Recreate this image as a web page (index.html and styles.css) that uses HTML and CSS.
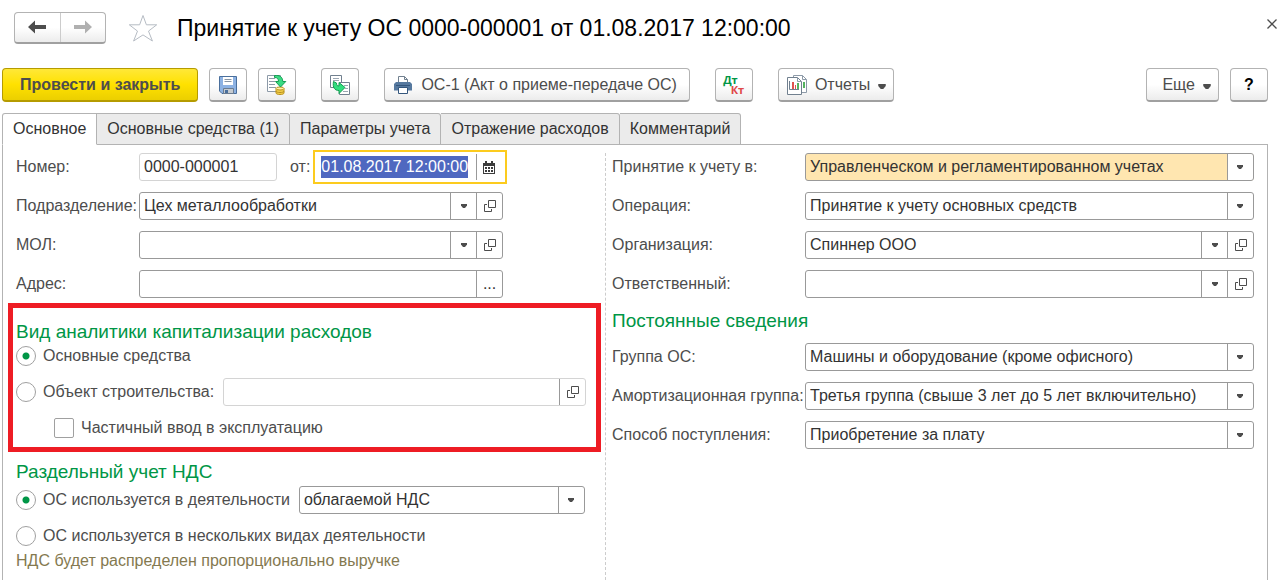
FILE: index.html
```html
<!DOCTYPE html>
<html lang="ru">
	<head>
		<meta charset="utf-8" />
		<title>Принятие к учету ОС</title>
		<link rel="stylesheet" href="styles.css">
		<script src="main.js" defer></script>
	</head>
	<body>
		<svg class="defs" aria-hidden="true">
			<symbol id="open" viewBox="0 0 12 12"><path d="M4.500 0.500h7v7h-7z M3 4.500H0.500v7h7V9" fill="none" stroke="#4d4d4d"/></symbol>
			<symbol id="arrow" viewBox="0 0 6 4"><path d="M0 0h6v1.500L4 4H2L0 1.500z" fill="#4d4d4d"/></symbol>
		</svg>

		<header class="header">
			<div class="nav">
				<button type="button" aria-label="Назад">
					<svg width="18" height="14" viewBox="0 0 18 14"><path d="M0 7l7-6.500v4.500h11v4H7v4.500z" fill="#4d4d4d"/></svg>
				</button>
				<button type="button" aria-label="Вперед">
					<svg width="18" height="14" viewBox="0 0 18 14"><path d="M18 7l-7-6.500v4.500H0v4h11v4.500z" fill="#b0b0b0"/></svg>
				</button>
			</div>
			<button type="button" class="star" aria-label="В избранное">
				<svg width="30" height="28" viewBox="0 0 30 28"><path d="M15 1.500l3.400 9.300h10.300l-8.200 6.300 3.900 9.900-9.400-6.100L5.600 27l3.900-9.900-8.200-6.300h10.300z" fill="#fff" stroke="#b6bcc4"/></svg>
			</button>
			<h1>Принятие к учету ОС 0000-000001 от 01.08.2017 12:00:00</h1>
			<button type="button" class="close" aria-label="Закрыть">
				<svg width="10" height="10" viewBox="0 0 10 10"><path d="M0.500 0.500l9 9M9.500 0.500l-9 9" stroke="#4d4d4d" stroke-width="1.300"/></svg>
			</button>
		</header>

		<div class="toolbar">
			<button type="button" class="btn primary">Провести и закрыть</button>
			<button type="button" class="btn icon" aria-label="Записать">
				<svg width="18" height="18" viewBox="0 0 18 18">
					<path d="M0.500 0.500h17v17H3l-2.500-2.500z" fill="#8db2e3" stroke="#4a6f9c"/>
					<path d="M4 1h10v8H4z" fill="#fff"/>
					<path d="M5.500 3.500h7M5.500 5.500h7" stroke="#8795a5"/>
					<path d="M4.500 12.500h10v5h-10z" fill="#c6cbd0" stroke="#6b7c90"/>
					<path d="M6 14h3v3H6z" fill="#4a6f9c"/>
				</svg>
			</button>
			<button type="button" class="btn icon" aria-label="Провести">
				<svg width="20" height="20" viewBox="0 0 20 20">
					<path d="M0.500 0.500h13v16H0.500z" fill="#fff" stroke="#8d9aa8"/>
					<path d="M2 3.500h6M2 6.500h6M2 9.500h6M2 12.500h7" stroke="#8d9aa8"/>
					<path d="M9 13.500v4.500c0 2 8 2 8 0v-4.500z" fill="#f2cf4b" stroke="#b9901f"/>
					<ellipse cx="13" cy="13.500" rx="4" ry="1.500" fill="#fff1a8" stroke="#b9901f"/>
					<path d="M9 16c0 2 8 2 8 0" fill="none" stroke="#b9901f"/>
					<path d="M7.500 0.500c5-.5 8 1 8.300 6h3L13.500 12 8.500 6.500h3c0-2.500-1-4-4-4z" fill="#3adb83" stroke="#149c51"/>
				</svg>
			</button>
			<button type="button" class="btn icon gap" aria-label="Создать на основании">
				<svg width="20" height="20" viewBox="0 0 20 20">
					<path d="M0.500 0.500h11v12h-11z" fill="#fff" stroke="#71808f"/>
					<path d="M3 3.500h6M3 5.500h6" stroke="#9ba7b3"/>
					<path d="M9.500 7.500h10v12h-10z" fill="#fff" stroke="#71808f"/>
					<path d="M14 10.500h4M15 13.500h3M13 16.500h5" stroke="#9ba7b3"/>
					<path d="M3.500 6.500l3 1.500c0 2 .5 3 2.500 3V7.500l6 5-6 6V15.500C4.500 15.500 2.500 12.500 3.500 6.500z" fill="#30df7e" stroke="#149c51"/>
				</svg>
			</button>
			<button type="button" class="btn print gap">
				<svg width="18" height="18" viewBox="0 0 18 18">
					<path d="M4.500 7V0.500h6l3 3V7" fill="#fff" stroke="#71808f"/>
					<path d="M10.500 0.500v3h3" fill="none" stroke="#71808f"/>
					<path d="M2 6h14l2 2v6.500H0V8z" fill="#56799f"/>
					<path d="M2 9.500h14" stroke="#34567c"/>
					<path d="M4.500 11.500h9v6h-9z" fill="#fff" stroke="#34567c"/>
				</svg>
				ОС-1 (Акт о приеме-передаче ОС)
			</button>
			<button type="button" class="btn icon gap dtkt" aria-label="Дт Кт">
				<span class="dt">Дт</span>
				<span class="kt">Кт</span>
			</button>
			<button type="button" class="btn reports gap">
				<svg width="20" height="20" viewBox="0 0 20 20">
					<path d="M6.500 0.500h9l4 4v13h-13z" fill="#fff" stroke="#8d9aa8"/>
					<path d="M15.500 0.500v4h4" fill="none" stroke="#8d9aa8"/>
					<path d="M16 7h2v6h-2z" fill="#55b35f"/>
					<path d="M0.500 2.500h10l4 4v13h-14z" fill="#fff" stroke="#71808f"/>
					<path d="M10.500 2.500v4h4" fill="none" stroke="#8d9aa8"/>
					<path d="M2.500 6v8.500H12" fill="none" stroke="#71808f"/>
					<path d="M5 7h2v7H5z" fill="#e0534f"/>
					<path d="M8 10h1v4H8z" fill="#e0534f"/>
					<path d="M10 8h2v6h-2z" fill="#55b35f"/>
				</svg>
				Отчеты
				<svg class="caret" width="8" height="5"><use href="#arrow"/></svg>
			</button>
			<button type="button" class="btn more">Еще <svg class="caret" width="8" height="5"><use href="#arrow"/></svg></button>
			<button type="button" class="btn icon help">?</button>
		</div>

		<nav class="tabs">
			<a href="#main" class="active">Основное</a>
			<a href="#assets">Основные средства (1)</a>
			<a href="#params">Параметры учета</a>
			<a href="#costs">Отражение расходов</a>
			<a href="#comment">Комментарий</a>
		</nav>

		<form class="panel" id="main">
			<div class="left">
				<div class="rows">
					<div class="row">
						<label for="number">Номер:</label>
						<div class="numdate">
							<input class="field pale number" id="number" type="text" value="0000-000001">
							<label for="date">от:</label>
							<div class="date">
								<input id="date" type="text" value="01.08.2017 12:00:00">
								<button type="button" aria-label="Календарь">
									<svg width="12" height="13" viewBox="0 0 12 13">
										<path d="M0 2h2V0h2v2h4V0h2v2h2v11H0z" fill="#3c3c3c"/>
										<path d="M1 5h10v7H1z" fill="#fff"/>
										<path d="M2 7h8M2 10h8" stroke="#3c3c3c" stroke-width="2" stroke-dasharray="2 1"/>
									</svg>
								</button>
							</div>
						</div>
					</div>
					<div class="row">
						<label for="dept">Подразделение:</label>
						<div class="field">
							<input id="dept" type="text" value="Цех металлообработки">
							<button type="button" aria-label="Выбрать"><svg width="6" height="4"><use href="#arrow"/></svg></button>
							<button type="button" aria-label="Открыть"><svg width="12" height="12"><use href="#open"/></svg></button>
						</div>
					</div>
					<div class="row">
						<label for="mol">МОЛ:</label>
						<div class="field">
							<input id="mol" type="text">
							<button type="button" aria-label="Выбрать"><svg width="6" height="4"><use href="#arrow"/></svg></button>
							<button type="button" aria-label="Открыть"><svg width="12" height="12"><use href="#open"/></svg></button>
						</div>
					</div>
					<div class="row">
						<label for="address">Адрес:</label>
						<div class="field">
							<input id="address" type="text">
							<button type="button" aria-label="Выбрать адрес">...</button>
						</div>
					</div>
				</div>

				<section class="group marked">
					<h2>Вид аналитики капитализации расходов</h2>
					<div class="option">
						<input type="radio" name="kind" id="kind1" checked>
						<label for="kind1">Основные средства</label>
					</div>
					<div class="option">
						<input type="radio" name="kind" id="kind2">
						<label for="kind2">Объект строительства:</label>
						<div class="field pale">
							<input type="text" aria-label="Объект строительства">
							<button type="button" aria-label="Открыть"><svg width="12" height="12"><use href="#open"/></svg></button>
						</div>
					</div>
					<div class="option nested">
						<input type="checkbox" id="partial">
						<label for="partial">Частичный ввод в эксплуатацию</label>
					</div>
				</section>

				<section class="group vat">
					<h2>Раздельный учет НДС</h2>
					<div class="option">
						<input type="radio" name="vat" id="vat1" checked>
						<label for="vat1">ОС используется в деятельности</label>
						<select class="field" aria-label="Вид деятельности"><option>облагаемой НДС</option></select>
					</div>
					<div class="option">
						<input type="radio" name="vat" id="vat2">
						<label for="vat2">ОС используется в нескольких видах деятельности</label>
					</div>
					<p class="note">НДС будет распределен пропорционально выручке</p>
				</section>
			</div>

			<div class="right rows">
				<div class="row">
					<label for="accept">Принятие к учету в:</label>
					<select class="field filled" id="accept"><option>Управленческом и регламентированном учетах</option></select>
				</div>
				<div class="row">
					<label for="operation">Операция:</label>
					<select class="field" id="operation"><option>Принятие к учету основных средств</option></select>
				</div>
				<div class="row">
					<label for="org">Организация:</label>
					<div class="field">
						<input id="org" type="text" value="Спиннер ООО">
						<button type="button" aria-label="Выбрать"><svg width="6" height="4"><use href="#arrow"/></svg></button>
						<button type="button" aria-label="Открыть"><svg width="12" height="12"><use href="#open"/></svg></button>
					</div>
				</div>
				<div class="row">
					<label for="person">Ответственный:</label>
					<div class="field">
						<input id="person" type="text">
						<button type="button" aria-label="Выбрать"><svg width="6" height="4"><use href="#arrow"/></svg></button>
						<button type="button" aria-label="Открыть"><svg width="12" height="12"><use href="#open"/></svg></button>
					</div>
				</div>
				<h2>Постоянные сведения</h2>
				<div class="row">
					<label for="group">Группа ОС:</label>
					<select class="field" id="group"><option>Машины и оборудование (кроме офисного)</option></select>
				</div>
				<div class="row">
					<label for="amort">Амортизационная группа:</label>
					<select class="field" id="amort"><option>Третья группа (свыше 3 лет до 5 лет включительно)</option></select>
				</div>
				<div class="row">
					<label for="source">Способ поступления:</label>
					<select class="field" id="source"><option>Приобретение за плату</option></select>
				</div>
			</div>
		</form>
	</body>
</html>
```
FILE: styles.css
```css
*{
	margin: 0;
	padding: 0;
	box-sizing: border-box;
}
body{
	display: flex;
	flex-direction: column;
	min-height: 100vh;
	background: #fff;
	color: #4d4d4d;
	font: 16px/22px "Liberation Sans", Arial, sans-serif;
}
input, button, select{
	font: inherit;
	color: inherit;
	border: none;
	background: none;
	outline: none;
}
label{
	white-space: nowrap;
}
svg{
	display: block;
	flex: none;
}
.defs{
	position: absolute;
	width: 0;
	height: 0;
}
h1{
	color: #000;
	font-size: 23px;
	line-height: 28px;
	font-weight: normal;
}
h2{
	color: #009646;
	font-size: 19px;
	line-height: 23px;
	font-weight: normal;
}

/* header */
.header{
	display: flex;
	align-items: center;
	height: 55px;
	padding-left: 14px;
}
.nav{
	display: flex;
	width: 92px;
	height: 32px;
	margin-right: 22px;
	border: 1px solid #b3b3b3;
	border-bottom: 2px solid #a0a0a0;
	border-radius: 4px;
	background: linear-gradient(#fff 50%, #ececec);
}
.nav button{
	display: flex;
	flex: 1;
	align-items: center;
	justify-content: center;
}
.nav button + button{
	border-left: 1px solid #ccc;
}
.star{
	margin-right: 19px;
}
.close{
	margin: 0 0 8px auto;
}

/* toolbar */
.toolbar{
	display: flex;
	gap: 11px;
	padding: 13px 9px 11px 2px;
}
.btn{
	display: flex;
	align-items: center;
	justify-content: center;
	height: 34px;
	border: 1px solid #b3b3b3;
	border-bottom: 2px solid #a0a0a0;
	border-radius: 4px;
	background: linear-gradient(#fff 50%, #ececec);
	white-space: nowrap;
}
.primary{
	padding: 0 17px;
	border-color: #b59b00;
	background: linear-gradient(#ffe838, #ffe100 50%, #ebcf00);
	font-weight: bold;
}
.icon{
	width: 38px;
}
.gap{
	margin-left: 14px;
}
.print{
	gap: 9px;
	padding: 0 12px 0 9px;
}
.reports{
	gap: 8px;
	padding: 0 7px 0 8px;
}
.caret{
	margin-top: 3px;
}
.dtkt{
	flex-direction: column;
	font: bold 11px/10px "Open Sans", sans-serif;
}
.dt{
	margin-right: 7px;
	color: #009646;
}
.kt{
	margin-left: 7px;
	color: #e04848;
}
.more{
	gap: 8px;
	margin-left: auto;
	padding: 0 7px 0 15px;
}
.help{
	color: #000;
	font-weight: bold;
}

/* tabs */
.tabs{
	display: flex;
	position: relative;
	height: 32px;
	margin: 0 0 -1px 2px;
}
.tabs a{
	padding: 4px 10px 0;
	border: 1px solid #b3b3b3;
	border-left-width: 0;
	border-radius: 0 3px 0 0;
	background: #ebebeb;
	color: #333;
	text-decoration: none;
}
.tabs .active{
	border-left-width: 1px;
	border-radius: 3px 0 0 0;
	border-bottom-color: #fff;
	background: #fff;
}

/* form */
.panel{
	display: grid;
	grid-template-columns: minmax(0, 603fr) minmax(0, 663fr);
	flex: 1;
	margin: 0 9px 0 2px;
	padding-top: 8px;
	border: 1px solid #b3b3b3;
	border-bottom: none;
}
.left .rows{
	padding: 0 102px 0 13px;
}
.right{
	padding: 0 13px 0 6px;
	border-left: 1px dashed #ccc;
}
.rows{
	display: flex;
	flex-direction: column;
	gap: 11px;
}
.row{
	display: grid;
	grid-template-columns: 123px 1fr;
	align-items: center;
	height: 28px;
}
.right .row{
	grid-template-columns: 193px 1fr;
}
.field{
	display: flex;
	width: 100%;
	min-width: 0;
	height: 28px;
	border: 1px solid #999;
	border-radius: 3px;
	background-color: #fff;
	color: #333;
}
.field input{
	flex: 1;
	min-width: 0;
	padding-left: 4px;
}
.field button{
	display: flex;
	align-items: center;
	justify-content: center;
	width: 26px;
	border-left: 1px solid #999;
}
select.field{
	appearance: none;
	padding: 0 30px 0 4px;
	background-image: url("data:image/svg+xml,%3Csvg xmlns='http://www.w3.org/2000/svg' width='26' height='26'%3E%3Cpath d='M0 0h26v26H0z' fill='%23fff'/%3E%3Cpath d='M0.500 0v26' stroke='%23999'/%3E%3Cpath d='M10 11h6v1.500l-2 2.500h-2l-2-2.500z' fill='%234d4d4d'/%3E%3C/svg%3E");
	background-repeat: no-repeat;
	background-position: right center;
}
.field.pale{
	border-color: #d4d4d4;
}
.field.filled{
	background-color: #ffe6b0;
}
.numdate{
	display: flex;
	align-items: center;
	height: 28px;
}
.number{
	width: 138px;
	margin-right: 13px;
	padding-left: 4px;
}
.date{
	display: flex;
	flex: none;
	width: 194px;
	height: 34px;
	margin-left: 3px;
	border: 2px solid #fccb1e;
	padding: 2px 0;
	background: #fff;
}
.date input{
	flex: 1;
	min-width: 0;
	padding-left: 6px;
	color: #333;
}
.date input::selection{
	background: #4f68c0;
	color: #fff;
}
.date button{
	width: 29px;
	padding-left: 6px;
	border-left: 1px solid #999;
}

/* option groups */
.group{
	display: flex;
	flex-direction: column;
	gap: 8px;
}
.group h2{
	margin-bottom: -9px;
}
.marked{
	margin: 5px 4px 0 5px;
	padding: 12px 10px 5px 3px;
	border: 5px solid #ee1c24;
}
.vat{
	padding: 8px 20px 0 13px;
}
.vat h2{
	margin-bottom: -5px;
}
.option{
	display: flex;
	align-items: center;
	height: 28px;
}
.option > input{
	appearance: none;
	flex: none;
	width: 20px;
	height: 20px;
	margin-right: 7px;
	border: 1px solid #a0a0a0;
	background: #fff;
}
.option > input[type="radio"]{
	border-radius: 50%;
}
.option > input[type="radio"]:checked{
	background: radial-gradient(circle, #009646 3px, #fff 4px);
}
.option > input[type="checkbox"]{
	border-radius: 2px;
}
.option .field{
	flex: 1;
	margin-left: 9px;
}
.nested{
	padding-left: 38px;
}
.note{
	margin-top: -8px;
	color: #84794f;
}
```
FILE: main.js
```js
//при открытии формы курсор стоит в дате, значение выделено
var date = document.getElementById("date");
date.focus();
date.select();
```
